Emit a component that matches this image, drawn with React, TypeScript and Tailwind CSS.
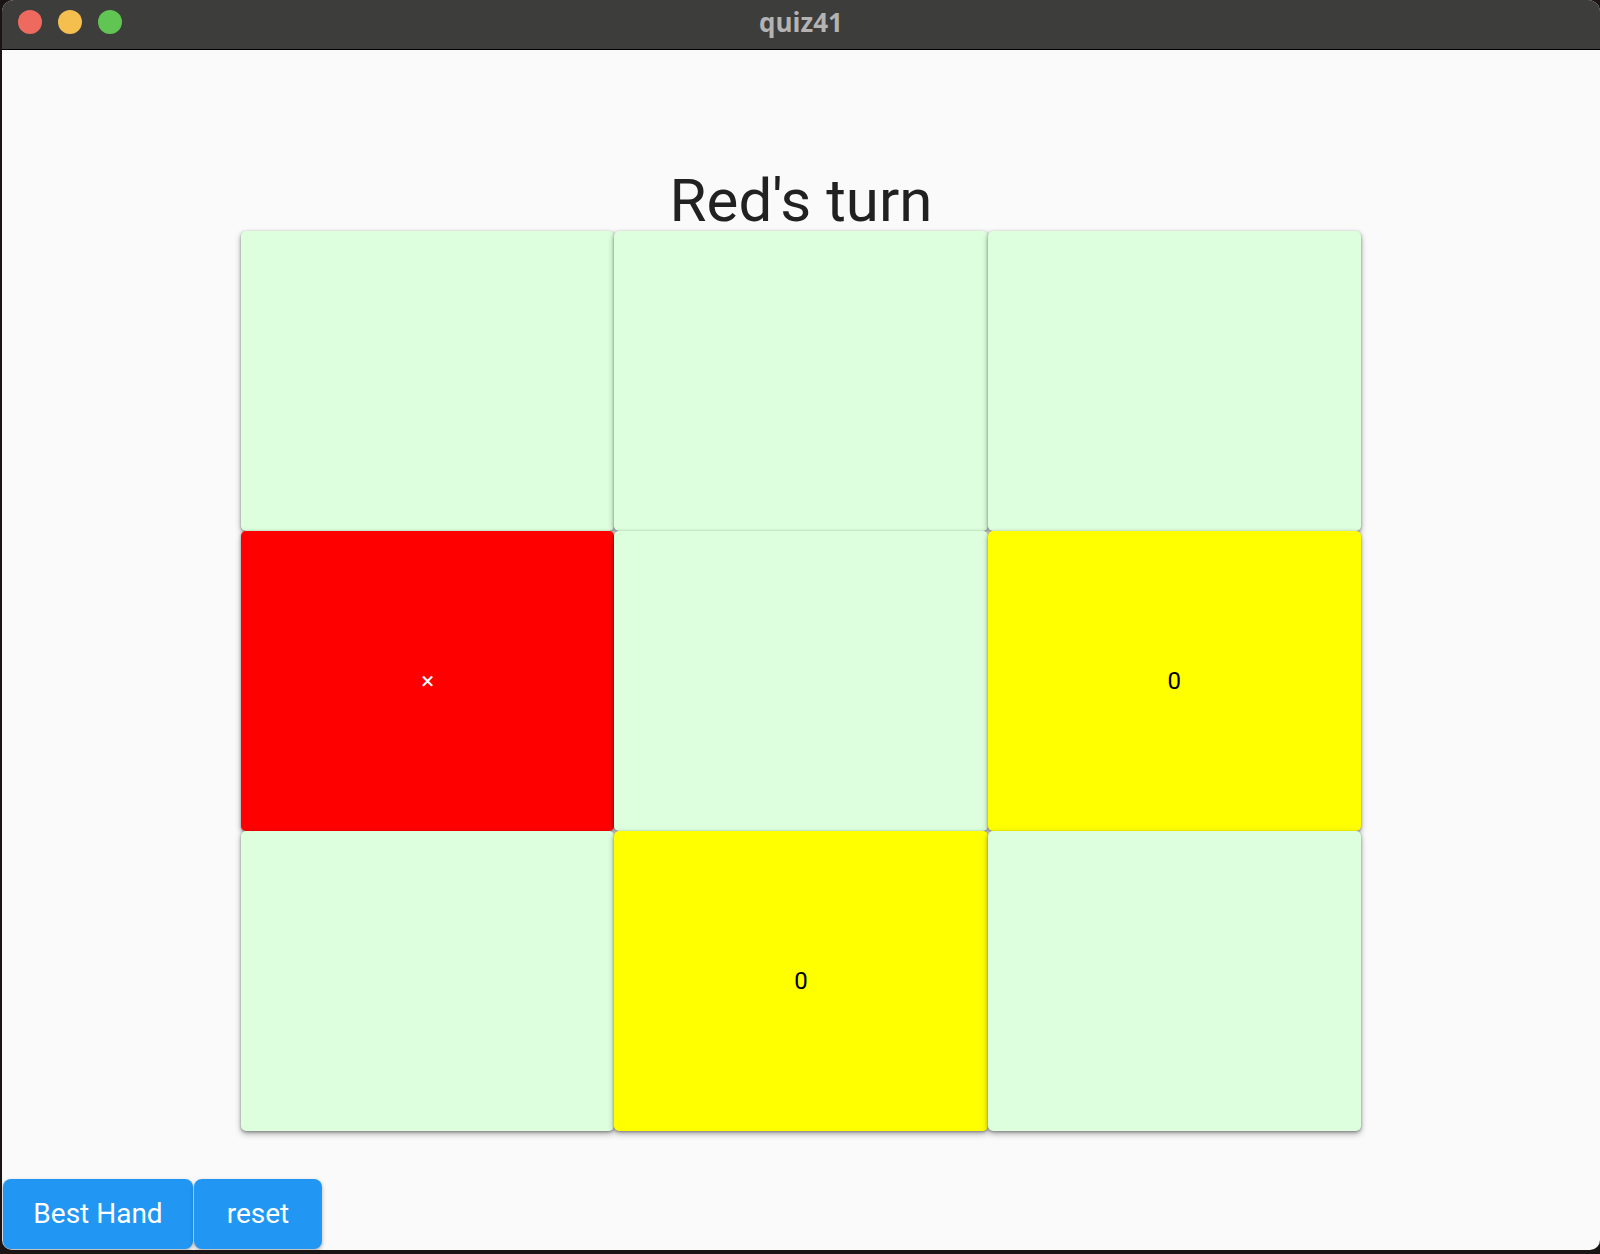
import React from "react";

type Cell = { bg: string; text?: string; textClass?: string };

const cells: Cell[] = [
  { bg: "bg-[#ddffdd]" },
  { bg: "bg-[#ddffdd]" },
  { bg: "bg-[#ddffdd]" },
  { bg: "bg-[#ff0000]", text: "×", textClass: "text-white" },
  { bg: "bg-[#ddffdd]" },
  { bg: "bg-[#ffff00]", text: "0", textClass: "text-black" },
  { bg: "bg-[#ddffdd]" },
  { bg: "bg-[#ffff00]", text: "0", textClass: "text-black" },
  { bg: "bg-[#ddffdd]" },
];

export default function App() {
  return (
    <div className="w-[1600px] h-[1254px] bg-[#1a1414] overflow-hidden" style={{ fontFamily: "Roboto, 'Noto Sans', sans-serif" }}>
      <div className="ml-[2px] w-[1598px] h-[1250px] flex flex-col rounded-t-[12px] rounded-b-[10px] overflow-hidden bg-[#fafafa]">
        {/* title bar */}
        <div className="relative h-[50px] shrink-0 bg-[#3d3d3b] border-b border-black flex items-center justify-center">
          <div className="absolute left-[16px] top-[10px] flex gap-[16px]">
            <div className="w-[24px] h-[24px] rounded-full bg-[#ee6a5f]" />
            <div className="w-[24px] h-[24px] rounded-full bg-[#f5bf4f]" />
            <div className="w-[24px] h-[24px] rounded-full bg-[#61c554]" />
          </div>
          <div className="text-[26px] font-bold text-[#b3b3b3] leading-none -mt-[6px]" style={{ fontFamily: "'Open Sans', 'Noto Sans', sans-serif" }}>
            quiz41
          </div>
        </div>
        {/* content */}
        <div className="flex-1 flex flex-col">
          <div className="mt-[121px] h-[60px] leading-[60px] text-[60px] text-[#212121] text-center">
            Red's turn
          </div>
          <div className="mx-auto w-[1120px] h-[900px] grid grid-cols-3 grid-rows-3">
            {cells.map((c, i) => (
              <div
                key={i}
                className={`${c.bg} rounded-[5px] flex items-center justify-center shadow-[0_1px_3px_rgba(0,0,0,0.35),0_3px_6px_rgba(0,0,0,0.3)]`}
              >
                {c.text && (
                  <span className={`${c.textClass} text-[24px] leading-none`}>{c.text}</span>
                )}
              </div>
            ))}
          </div>
          <div className="mt-[48px] ml-[1px] flex gap-[1px]">
            <button className="w-[190px] h-[70px] rounded-[8px] bg-[#2196f3] text-white text-[28px] shadow-[0_2px_4px_rgba(0,0,0,0.3)]">
              Best Hand
            </button>
            <button className="w-[128px] h-[70px] rounded-[8px] bg-[#2196f3] text-white text-[28px] shadow-[0_2px_4px_rgba(0,0,0,0.3)]">
              reset
            </button>
          </div>
        </div>
      </div>
    </div>
  );
}
